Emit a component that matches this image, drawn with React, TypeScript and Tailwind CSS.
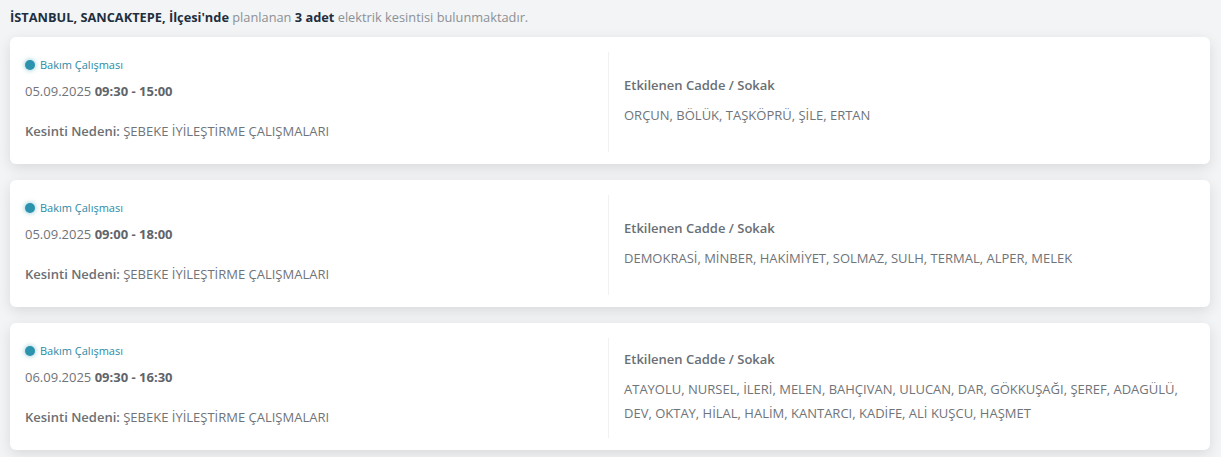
import React from "react";

type Item = { date: string; time: string; streets: string };

const items: Item[] = [
  { date: "05.09.2025", time: "09:30 - 15:00", streets: "ORÇUN, BÖLÜK, TAŞKÖPRÜ, ŞİLE, ERTAN" },
  { date: "05.09.2025", time: "09:00 - 18:00", streets: "DEMOKRASİ, MİNBER, HAKİMİYET, SOLMAZ, SULH, TERMAL, ALPER, MELEK" },
  {
    date: "06.09.2025",
    time: "09:30 - 16:30",
    streets:
      "ATAYOLU, NURSEL, İLERİ, MELEN, BAHÇIVAN, ULUCAN, DAR, GÖKKUŞAĞI, ŞEREF, ADAGÜLÜ, DEV, OKTAY, HİLAL, HALİM, KANTARCI, KADİFE, ALİ KUŞCU, HAŞMET",
  },
];

function Card({ item }: { item: Item }) {
  return (
    <div className="bg-white rounded-md shadow-[0_4px_14px_rgba(0,0,0,0.11)] pt-[15px] pb-[12px] flex">
      <div className="w-[599px] shrink-0 border-r border-[#f0f1f2] pl-[15px] pt-[5px] pb-[11px]">
        <div className="flex items-center h-4">
          <span className="w-[10px] h-[10px] rounded-full bg-[#2b93ad] shadow-[0_0_5px_rgba(43,147,173,0.6)]" />
          <span className="ml-[5px] text-[11px] text-[#2b8aa5]">Bakım Çalışması</span>
        </div>
        <div className="mt-2 h-5 leading-5 text-[13px] text-[#6f7479]">
          {item.date} <span className="font-bold text-[#5f6469]">{item.time}</span>
        </div>
        <div className="mt-5 h-5 leading-5 text-[13px] text-[#6f7479]">
          <span className="font-semibold text-[#6a6f74]">Kesinti Nedeni:</span> ŞEBEKE İYİLEŞTİRME ÇALIŞMALARI
        </div>
      </div>
      <div className="flex-1 pl-[15px] pr-[20px] pb-[2px] flex flex-col justify-center">
        <div className="text-[13px] leading-5 font-semibold text-[#6a6f74]">Etkilenen Cadde / Sokak</div>
        <div className="mt-2 text-[13px] leading-6 text-[#6f7479] max-w-[560px]">{item.streets}</div>
      </div>
    </div>
  );
}

export default function App() {
  return (
    <div
      className="w-[1221px] h-[457px] bg-[#f3f4f5] overflow-hidden"
      style={{ fontFamily: '"Open Sans", "Noto Sans", sans-serif' }}
    >
      <div className="pl-[10px] pt-[8px] h-[37px] text-[12.8px] leading-[18px] text-[#8b9096]">
        <span className="font-bold text-[#1e2f3f]">İSTANBUL, SANCAKTEPE, İlçesi'nde</span> planlanan{" "}
        <span className="font-bold text-[#1e2f3f]">3 adet</span> elektrik kesintisi bulunmaktadır.
      </div>
      <div className="pl-[10px] pr-[11px] flex flex-col gap-4">
        {items.map((it, i) => (
          <Card key={i} item={it} />
        ))}
      </div>
    </div>
  );
}
